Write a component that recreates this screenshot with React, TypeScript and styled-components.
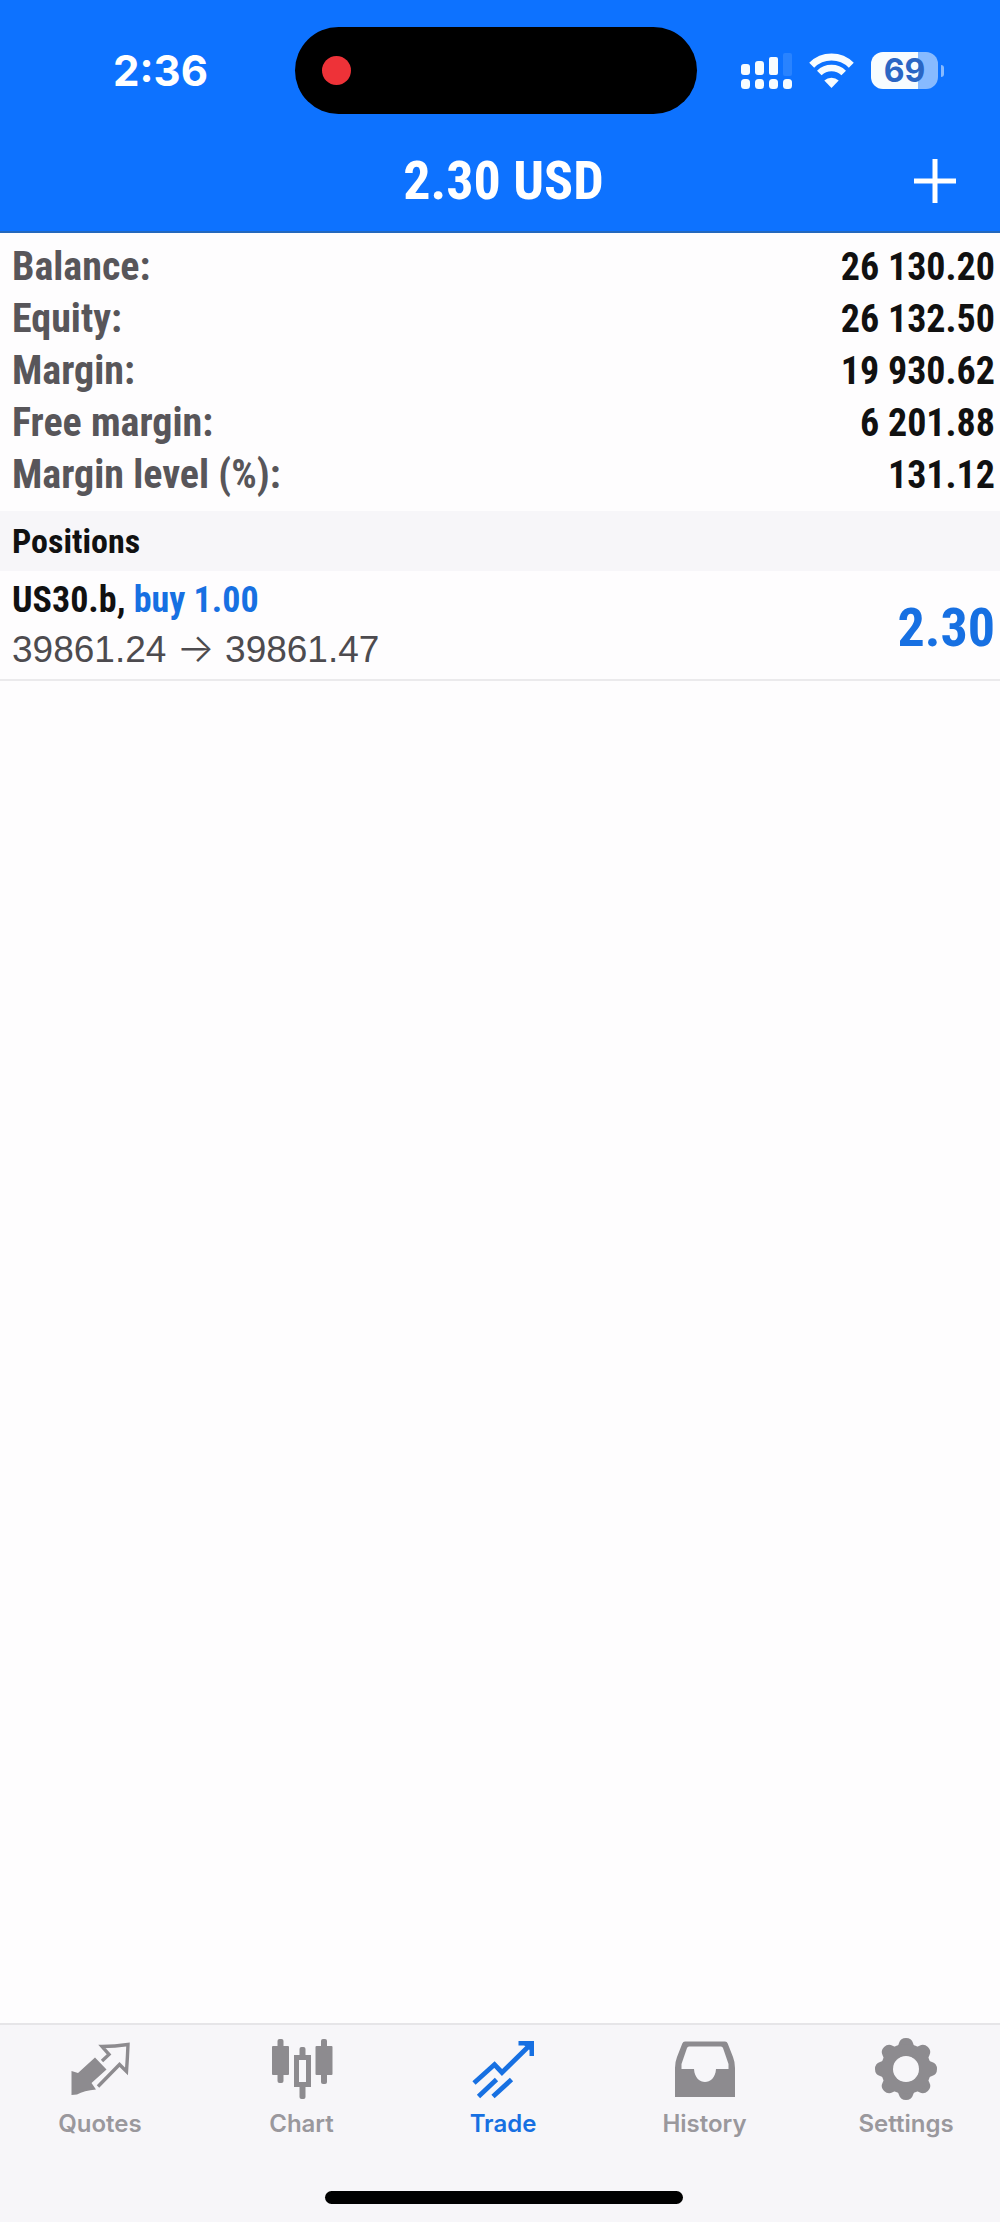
import React from "react";
import styled, { createGlobalStyle } from "styled-components";

const narrow = `"Roboto Condensed", "Liberation Sans Narrow", "Arial Narrow", "Liberation Sans", sans-serif`;
const system = `Inter, "Liberation Sans", sans-serif`;
const blue = "#0d72ff";
const accent = "#1770e2";

const GlobalStyle = createGlobalStyle`
  *, *::before, *::after { box-sizing: border-box; }
  body { margin: 0; background: #fefdfe; }
`;

const Screen = styled.div`
  display: flex;
  flex-direction: column;
  min-height: 100vh;
  background: #fefdfe;
  color: #111;
  font-family: ${narrow};
`;

const Header = styled.header`
  background: ${blue};
  border-bottom: 2px solid #2468bd;
  color: #fff;
`;

const StatusBar = styled.div`
  display: grid;
  grid-template-columns: 1fr 402px 1fr;
  align-items: center;
  padding: 27px 8px 0 0;
`;

const Time = styled.time`
  padding-left: 26px;
  text-align: center;
  font: 700 42px/52px ${system};
`;

const Island = styled.div`
  display: flex;
  align-items: center;
  height: 87px;
  padding-left: 27px;
  border-radius: 44px;
  background: #000;
`;

const RecordDot = styled.span`
  width: 29px;
  height: 29px;
  border-radius: 50%;
  background: #ee3238;
`;

const Indicators = styled.div`
  display: flex;
  justify-content: center;
  align-items: center;
  gap: 17px;
  height: 38px;
  padding-right: 4px;
`;

const Battery = styled.div`
  display: flex;
  align-items: center;
  gap: 3px;
`;

const BatteryBody = styled.span`
  width: 67px;
  height: 37px;
  border-radius: 12px;
  background: linear-gradient(90deg, #f7fcff 70%, #87baff 70%);
  color: #2a66c4;
  text-align: center;
  font: 700 32px/37px ${system};
`;

const BatteryCap = styled.span`
  width: 3px;
  height: 12px;
  border-radius: 0 3px 3px 0;
  background: #87baff;
`;

const NavBar = styled.div`
  display: grid;
  grid-template-columns: 1fr auto 1fr;
  align-items: center;
  height: 117px;
  padding: 16px 33px 0 40px;
`;

const Title = styled.h1`
  grid-column: 2;
  margin: 0;
  font-size: 54px;
  line-height: 64px;
  font-weight: 700;
`;

const AddButton = styled.button`
  display: flex;
  justify-content: center;
  align-items: center;
  justify-self: end;
  width: 64px;
  height: 64px;
  padding: 0;
  border: 0;
  background: none;
  color: #fff;
  cursor: pointer;
`;

const Summary = styled.dl`
  margin: 0;
  padding: 8px 5px 10px 12px;
`;

const SummaryRow = styled.div`
  display: flex;
  justify-content: space-between;
  line-height: 52px;
  font-weight: 700;
`;

const Label = styled.dt`
  color: #58565a;
  font-size: 40px;
`;

const Value = styled.dd`
  margin: 0;
  font-size: 38px;
`;

const SectionTitle = styled.h2`
  margin: 0;
  padding: 0 12px;
  background: #f7f6f9;
  font-size: 34px;
  line-height: 60px;
  font-weight: 700;
`;

const PositionList = styled.ul`
  margin: 0;
  padding: 0;
  list-style: none;
`;

const PositionRow = styled.li`
  display: flex;
  justify-content: space-between;
  align-items: flex-end;
  padding: 4px 5px 4px 12px;
  border-bottom: 2px solid #ebeaec;
`;

const Instrument = styled.div`
  font-size: 36px;
  line-height: 50px;
  font-weight: 700;
`;

const Side = styled.span`
  color: ${accent};
`;

const Prices = styled.div`
  color: #4d4b4f;
  font: 400 37px/50px "Liberation Sans", sans-serif;
`;

const Arrow = styled.span`
  font: 300 40px/36px Inter, sans-serif;
`;

const Profit = styled.strong`
  color: ${accent};
  font-size: 54px;
  line-height: 94px;
  font-weight: 700;
`;

const Content = styled.main`
  flex: 1;
`;

const Footer = styled.footer`
  padding-left: 8px;
  border-top: 2px solid #e6e5e8;
  background: #f7f6f9;
`;

const Tabs = styled.nav`
  display: flex;
  justify-content: space-between;
  padding: 12px 38px 0 36px;
`;

const Tab = styled.a<{ $active?: boolean }>`
  display: flex;
  flex-direction: column;
  align-items: center;
  gap: 8px;
  width: 112px;
  color: ${(p) => (p.$active ? accent : "#8d8b8f")};
  font: 600 24px/30px ${system};
  text-decoration: none;
`;

const TabLabel = styled.span<{ $active?: boolean }>`
  color: ${(p) => (p.$active ? accent : "#9a989d")};
`;

const HomeIndicator = styled.div`
  width: 36%;
  height: 13px;
  margin: 52px auto 18px;
  border-radius: 7px;
  background: #000;
`;

const SignalIcon = () => (
  <svg width="51" height="38" viewBox="0 0 51 38" fill="#f7fcff" aria-hidden="true">
    <rect x="0" y="12" width="9" height="11" rx="3" />
    <rect x="14" y="9" width="9" height="14" rx="3" />
    <rect x="28" y="5" width="9" height="18" rx="2" />
    <rect x="42" y="1" width="9" height="23" rx="2" opacity="0.12" />
    <rect x="0" y="27" width="9" height="10" rx="3.5" />
    <rect x="14" y="27" width="9" height="10" rx="3.5" />
    <rect x="28" y="27" width="9" height="10" rx="3.5" />
    <rect x="42" y="27" width="9" height="10" rx="3.5" />
  </svg>
);

const WifiIcon = () => (
  <svg width="45" height="38" viewBox="0 0 45 38" fill="none" aria-hidden="true">
    <path d="M2.7 13.2a28 28 0 0 1 39.6 0" stroke="#f7fcff" strokeWidth="7" />
    <path d="M10.3 21a17.4 17.4 0 0 1 24.4 0" stroke="#f7fcff" strokeWidth="6.5" />
    <path d="M15.3 28.6a10.4 10.4 0 0 1 14.4 0L22.5 36z" fill="#f7fcff" />
  </svg>
);

const PlusIcon = () => (
  <svg width="44" height="44" viewBox="0 0 44 44" stroke="currentColor" strokeWidth="5" aria-hidden="true">
    <path d="M1 22h42M22 0v44" />
  </svg>
);

const QuotesIcon = () => (
  <svg width="64" height="64" viewBox="0 0 64 64" aria-hidden="true">
    <path d="M27 20.5 38.5 32.5 23.5 46 28 52.5Q16 53.5 9 57.5L3.500 58 3.500 34 10 36z" fill="currentColor" />
    <path d="M34 24 41 17.5 34 9.5Q47 9.5 60 7.5 59.5 20 58.5 34.5L51.5 27.5 30 49.5" fill="none" stroke="currentColor" strokeWidth="3.4" />
  </svg>
);

const ChartIcon = () => (
  <svg width="64" height="64" viewBox="0 0 64 64" fill="currentColor" aria-hidden="true">
    <rect x="2" y="9" width="17" height="29" rx="1" />
    <rect x="7.5" y="2" width="6" height="44" rx="2" />
    <rect x="45.5" y="9" width="17" height="29" rx="1" />
    <rect x="51" y="2" width="6" height="45" rx="2" />
    <path fillRule="evenodd" d="M24 18h17v32H24zM29 23v22h7V23z" />
    <rect x="29.5" y="10" width="6" height="11" rx="2" />
    <rect x="29.5" y="47" width="6" height="15" rx="2" />
  </svg>
);

const TradeIcon = () => (
  <svg width="64" height="64" viewBox="0 0 64 64" fill="none" stroke="currentColor" strokeWidth="4.8" aria-hidden="true">
    <path d="M3 46 23.5 27.5 31 35.5 59 8" />
    <path d="M47.5 4H63v15h-4.5v-6L56 10l-3-1.500h-5.500z" fill="currentColor" stroke="none" />
    <path d="M7.5 59.5 25.5 42.5M22 59.5 40.5 42.5" />
  </svg>
);

const HistoryIcon = () => (
  <svg width="64" height="64" viewBox="0 0 64 64" aria-hidden="true">
    <path
      fill="currentColor"
      fillRule="evenodd"
      d="M12 4.500h40q2 0 2.700 2L60 20q2 5 2 11v29H2V31q0-6 2-11L9.300 6.500q.7-2 2.700-2zM16 9.500q-1.500 0-2 1.500L8.500 27v5H21c.5 9 6 13 11 13s10.500-4 11-13h12.500v-5L50 11q-.5-1.500-2-1.500z"
    />
  </svg>
);

const SettingsIcon = () => (
  <svg width="64" height="64" viewBox="0 0 64 64" aria-hidden="true">
    <g fill="currentColor">
      {[0, 45, 90, 135, 180, 225, 270, 315].map((angle) => (
        <path key={angle} d="M20 12q4-2 5-6 1.500-5 7-5t7 5q1 4 5 6v8H20z" transform={`rotate(${angle} 32 32)`} />
      ))}
    </g>
    <circle cx="32" cy="32" r="19" fill="none" stroke="currentColor" strokeWidth="12" />
    <circle cx="32" cy="32" r="13" fill="#f7f6f9" />
  </svg>
);

const summary = [
  ["Balance:", "26 130.20"],
  ["Equity:", "26 132.50"],
  ["Margin:", "19 930.62"],
  ["Free margin:", "6 201.88"],
  ["Margin level (%):", "131.12"],
];

const tabs = [
  { name: "Quotes", Icon: QuotesIcon },
  { name: "Chart", Icon: ChartIcon },
  { name: "Trade", Icon: TradeIcon, active: true },
  { name: "History", Icon: HistoryIcon },
  { name: "Settings", Icon: SettingsIcon },
];

export default function App() {
  return (
    <Screen>
      <GlobalStyle />
      <Header>
        <StatusBar>
          <Time>2:36</Time>
          <Island>
            <RecordDot />
          </Island>
          <Indicators>
            <SignalIcon />
            <WifiIcon />
            <Battery>
              <BatteryBody>69</BatteryBody>
              <BatteryCap />
            </Battery>
          </Indicators>
        </StatusBar>
        <NavBar>
          <Title>2.30 USD</Title>
          <AddButton type="button" aria-label="New order">
            <PlusIcon />
          </AddButton>
        </NavBar>
      </Header>
      <Content>
        <Summary>
          {summary.map(([label, value]) => (
            <SummaryRow key={label}>
              <Label>{label}</Label>
              <Value>{value}</Value>
            </SummaryRow>
          ))}
        </Summary>
        <SectionTitle>Positions</SectionTitle>
        <PositionList>
          <PositionRow>
            <div>
              <Instrument>
                US30.b, <Side>buy 1.00</Side>
              </Instrument>
              <Prices>
                39861.24 <Arrow>→</Arrow> 39861.47
              </Prices>
            </div>
            <Profit>2.30</Profit>
          </PositionRow>
        </PositionList>
      </Content>
      <Footer>
        <Tabs>
          {tabs.map(({ name, Icon, active }) => (
            <Tab key={name} href={`#${name.toLowerCase()}`} $active={active} aria-current={active ? "page" : undefined}>
              <Icon />
              <TabLabel $active={active}>{name}</TabLabel>
            </Tab>
          ))}
        </Tabs>
        <HomeIndicator />
      </Footer>
    </Screen>
  );
}
